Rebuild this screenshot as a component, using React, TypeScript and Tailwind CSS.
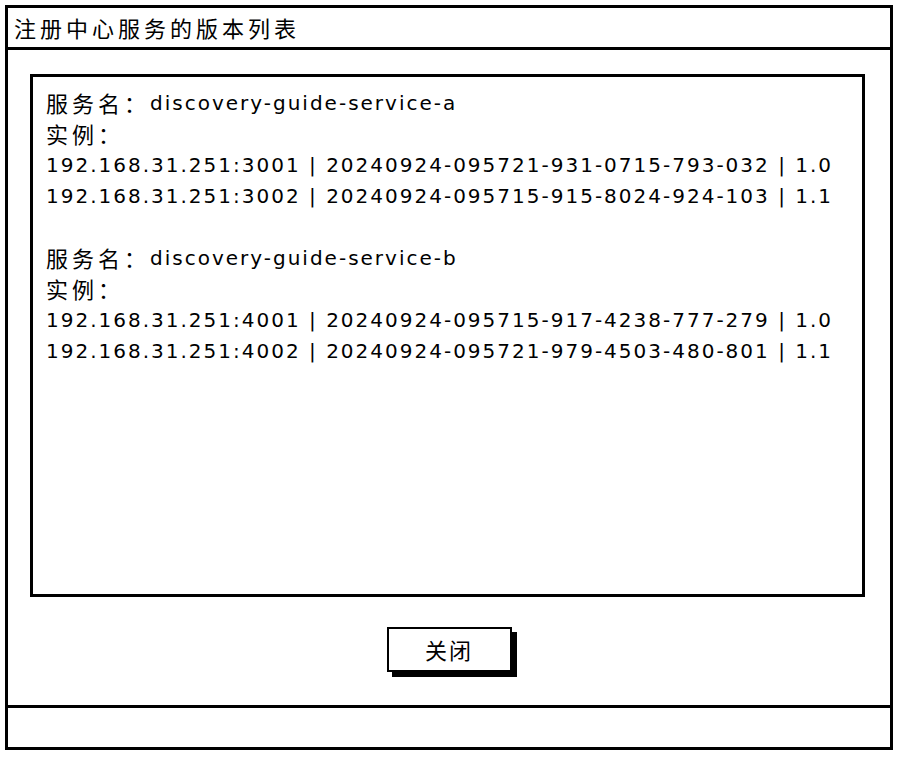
const latin = '[font-family:"DejaVu_Sans","Noto_Sans_CJK_SC",sans-serif]'

const Cjk = ({ children }: { children: React.ReactNode }) => (
  <span className='text-[22px] tracking-[4px] [font-family:"Noto_Sans_CJK_SC",sans-serif]'>{children}</span>
)

interface Service {
  name: string
  instances: string[]
}

const services: Service[] = [
  {
    name: 'discovery-guide-service-a',
    instances: [
      '192.168.31.251:3001 | 20240924-095721-931-0715-793-032 | 1.0',
      '192.168.31.251:3002 | 20240924-095715-915-8024-924-103 | 1.1',
    ],
  },
  {
    name: 'discovery-guide-service-b',
    instances: [
      '192.168.31.251:4001 | 20240924-095715-917-4238-777-279 | 1.0',
      '192.168.31.251:4002 | 20240924-095721-979-4503-480-801 | 1.1',
    ],
  },
]

const Line = ({ children }: { children?: React.ReactNode }) => (
  <div className="flex h-[31px] items-center whitespace-pre">{children}</div>
)

export default function App() {
  return (
    <div className="h-[757px] w-[897px] bg-white pl-[5px] pt-[5px] text-black">
      <div className="flex h-[745px] w-[888px] flex-col border-[3px] border-black">
        {/* title bar */}
        <div className="flex h-[42px] shrink-0 items-center border-b-[3px] border-black pl-[6px]">
          <span className='text-[22px] tracking-[4px] [font-family:"Noto_Sans_CJK_SC",sans-serif]'>
            注册中心服务的版本列表
          </span>
        </div>

        {/* body */}
        <div className="flex flex-1 flex-col items-center">
          <div
            className={`mt-[24px] ml-[22px] h-[523px] w-[835px] self-start border-[3px] border-black pl-[13px] pt-[10px] text-[20px] tracking-[2px] ${latin}`}
          >
            {services.map((s, i) => (
              <div key={s.name}>
                {i > 0 && <Line />}
                <Line>
                  <Cjk>服务名：</Cjk>
                  <span>{s.name}</span>
                </Line>
                <Line>
                  <Cjk>实例：</Cjk>
                </Line>
                {s.instances.map((inst) => (
                  <Line key={inst}>{inst}</Line>
                ))}
              </div>
            ))}
          </div>

          <button
            type="button"
            className='mt-[30px] flex h-[45px] w-[125px] items-center justify-center border-2 border-black bg-white text-[22px] tracking-[2px] shadow-[5px_5px_0_#000] [font-family:"Noto_Sans_CJK_SC",sans-serif]'
          >
            关闭
          </button>
        </div>

        {/* status bar */}
        <div className="h-[42px] shrink-0 border-t-[3px] border-black" />
      </div>
    </div>
  )
}
